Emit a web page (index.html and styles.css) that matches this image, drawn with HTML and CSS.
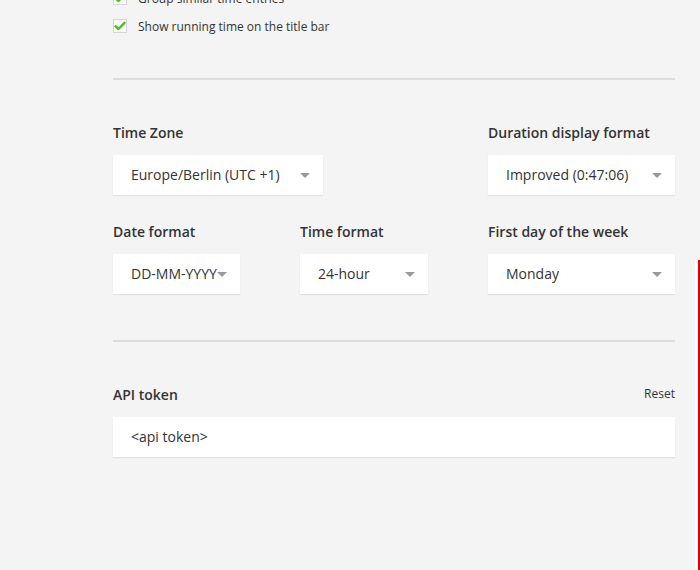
FILE: index.html
```html
<!DOCTYPE html>
<html>
<head>
<meta charset="utf-8">
<link rel="stylesheet" href="styles.css">
</head>
<body>
<div class="page">
  <div class="checks">
    <label class="check-row">
      <span class="checkbox"><svg width="12" height="10" viewBox="0 0 12 10"><path d="M1.5 5.2 L4.5 8 L10.5 1.8" fill="none" stroke="#4cbf1e" stroke-width="2.4" stroke-linecap="round" stroke-linejoin="round"/></svg></span>
      <span class="check-text">Group similar time entries</span>
    </label>
    <label class="check-row">
      <span class="checkbox"><svg width="12" height="10" viewBox="0 0 12 10"><path d="M1.5 5.2 L4.5 8 L10.5 1.8" fill="none" stroke="#4cbf1e" stroke-width="2.4" stroke-linecap="round" stroke-linejoin="round"/></svg></span>
      <span class="check-text">Show running time on the title bar</span>
    </label>
  </div>

  <hr class="divider">

  <div class="formats">
    <div class="field span2">
      <div class="label">Time Zone</div>
      <div class="select w210">Europe/Berlin (UTC +1)<span class="arrow"></span></div>
    </div>
    <div class="field">
      <div class="label">Duration display format</div>
      <div class="select w187">Improved (0:47:06)<span class="arrow"></span></div>
    </div>
    <div class="field">
      <div class="label">Date format</div>
      <div class="select w127">DD-MM-YYYY<span class="arrow"></span></div>
    </div>
    <div class="field">
      <div class="label">Time format</div>
      <div class="select w128">24-hour<span class="arrow"></span></div>
    </div>
    <div class="field">
      <div class="label">First day of the week</div>
      <div class="select w187">Monday<span class="arrow"></span></div>
    </div>
  </div>

  <hr class="divider second">

  <div class="api">
    <div class="api-head">
      <div class="label">API token</div>
      <a class="reset">Reset</a>
    </div>
    <div class="input">&lt;api token&gt;</div>
  </div>
</div>
<div class="edge"></div>
</body>
</html>
```
FILE: styles.css
```css
html, body {
  margin: 0;
  padding: 0;
  height: 570px;
  overflow: hidden;
  background: #f4f4f4;
}
body {
  font-family: "Open Sans", "Liberation Sans", sans-serif;
  color: #333;
  position: relative;
}
.page {
  padding: 0 25px 0 113px;
}
.checks {
  margin-top: -16px;
}
.check-row {
  display: flex;
  align-items: center;
  height: 28px;
}
.checkbox {
  width: 12px;
  height: 12px;
  border: 1px solid #d6d6d6;
  background: #fff;
  display: flex;
  align-items: center;
  justify-content: center;
  margin-right: 11px;
}
.check-text {
  font-size: 12px;
  color: #333;
}
.divider {
  border: 0;
  height: 2px;
  background: #dcdcdc;
  margin: 38px 0 0 0;
}
.divider.second {
  margin-top: 46px;
}
.formats {
  display: grid;
  grid-template-columns: 187px 188px 187px;
  row-gap: 27px;
  margin-top: 43px;
}
.span2 {
  grid-column: span 2;
}
.label {
  font-size: 14px;
  font-weight: 600;
  line-height: 20px;
  color: #333;
}
.select {
  position: relative;
  margin-top: 12px;
  height: 40px;
  line-height: 40px;
  background: #fff;
  box-shadow: 0 1px 1px rgba(0,0,0,0.07);
  padding-left: 18px;
  box-sizing: border-box;
  font-size: 14px;
  color: #333;
  white-space: nowrap;
  overflow: hidden;
}
.w210 { width: 210px; }
.w187 { width: 187px; }
.w127 { width: 127px; }
.w128 { width: 128px; }
.arrow {
  position: absolute;
  right: 13px;
  top: 18px;
  width: 0;
  height: 0;
  border-left: 5px solid transparent;
  border-right: 5px solid transparent;
  border-top: 5px solid #999;
}
.api {
  margin-top: 43px;
}
.api-head {
  display: flex;
  justify-content: space-between;
  align-items: center;
}
.reset {
  font-size: 12px;
  color: #333;
  margin-top: -4px;
}
.input {
  margin-top: 12px;
  height: 40px;
  line-height: 40px;
  background: #fff;
  box-shadow: 0 1px 1px rgba(0,0,0,0.07);
  padding-left: 18px;
  font-size: 14px;
  color: #333;
}
.edge {
  position: absolute;
  left: 695px;
  top: 260px;
  width: 3px;
  height: 310px;
  background: #fff;
  border-right: 2px solid #e00000;
}
```
